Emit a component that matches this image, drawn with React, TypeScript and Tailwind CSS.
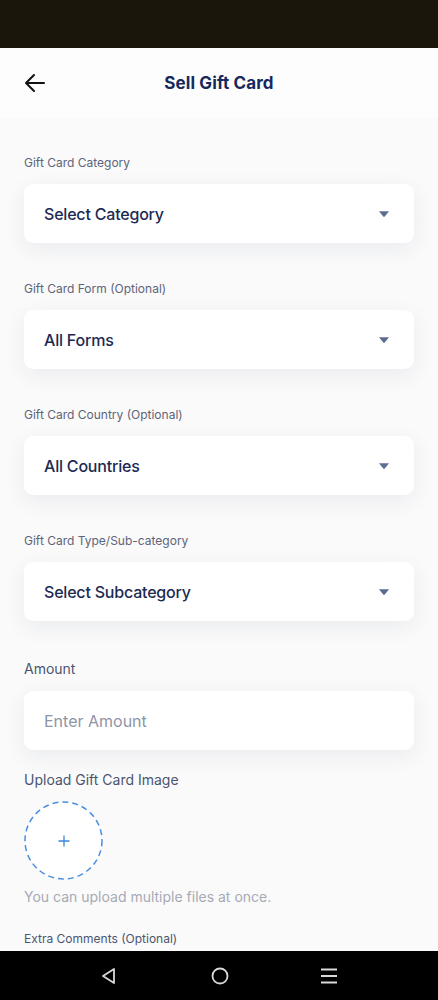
import React from "react";

function Caret() {
  return (
    <svg width="12" height="8" viewBox="0 0 12 8">
      <path d="M1 1.2 H11 L6.8 6.4 Q6 7.2 5.2 6.4 Z" fill="#5d6d92" />
    </svg>
  );
}

function SelectCard({ label, value }: { label: string; value: string }) {
  return (
    <div className="flex flex-col">
      <div className="text-[12px] leading-[16px] text-[#5d6479]">{label}</div>
      <div className="mt-[13px] h-[59px] rounded-[9px] bg-white shadow-[0_6px_22px_rgba(30,40,80,0.07)] flex items-center justify-between pl-[20px] pr-[24px]">
        <span className="text-[16px] font-medium tracking-[-0.2px] text-[#1c2a52]">{value}</span>
        <Caret />
      </div>
    </div>
  );
}

export default function App() {
  return (
    <div className="w-[438px] h-[1000px] flex flex-col bg-[#fafafa] overflow-hidden" style={{ fontFamily: "Inter, 'Noto Sans', sans-serif" }}>
      <div className="h-[48px] bg-[#1b160b] shrink-0" />
      <div className="h-[70px] relative flex items-start justify-center bg-[#fdfdfd] shrink-0">
        <svg className="absolute left-[24px] top-[25px]" width="21" height="20" viewBox="0 0 21 20">
          <path d="M20 10 H2 M10 2 L2 10 L10 18" fill="none" stroke="#111" strokeWidth="2" strokeLinecap="round" strokeLinejoin="round" />
        </svg>
        <div className="mt-[24px] text-[17px] leading-[22px] font-bold tracking-[0.1px] text-[#17295c]">Sell Gift Card</div>
      </div>
      <div className="flex-1 flex flex-col px-[24px] pt-[37px]">
        <div className="flex flex-col gap-[38px]">
          <SelectCard label="Gift Card Category" value="Select Category" />
          <SelectCard label="Gift Card Form (Optional)" value="All Forms" />
          <SelectCard label="Gift Card Country (Optional)" value="All Countries" />
          <SelectCard label="Gift Card Type/Sub-category" value="Select Subcategory" />
        </div>
        <div className="mt-[38px] text-[14px] leading-[20px] text-[#4b5570]">Amount</div>
        <div className="mt-[12px] h-[59px] rounded-[9px] bg-white shadow-[0_6px_22px_rgba(30,40,80,0.07)] flex items-center pl-[20px]">
          <span className="text-[16px] text-[#8f94a8]">Enter Amount</span>
        </div>
        <div className="mt-[20px] text-[14px] leading-[20px] text-[#4b5570]">Upload Gift Card Image</div>
        <div className="mt-[11px] w-[79px] h-[79px] relative flex items-center justify-center">
          <svg className="absolute inset-0" width="79" height="79" viewBox="0 0 79 79">
            <circle cx="39.5" cy="39.5" r="38.5" fill="#ffffff" stroke="#4a8ee0" strokeWidth="1.5" strokeDasharray="6 4" />
          </svg>
          <svg className="relative" width="12" height="12" viewBox="0 0 12 12">
            <path d="M6 0.5 V11.5 M0.5 6 H11.5" stroke="#3d85dc" strokeWidth="1.3" />
          </svg>
        </div>
        <div className="mt-[7px] text-[14px] leading-[20px] text-[#a6aab6]">You can upload multiple files at once.</div>
        <div className="mt-[24px] text-[12px] leading-[16px] text-[#4b5570]">Extra Comments (Optional)</div>
      </div>
      <div className="h-[49px] bg-black shrink-0 flex items-center justify-between pl-[99px] pr-[100px]">
        <svg width="20" height="20" viewBox="0 0 20 20">
          <path d="M15 3 V17 L4 10 Z" fill="none" stroke="#d8d8d8" strokeWidth="1.8" strokeLinejoin="round" />
        </svg>
        <svg width="20" height="20" viewBox="0 0 20 20">
          <circle cx="10" cy="10" r="7.5" fill="none" stroke="#d8d8d8" strokeWidth="1.8" />
        </svg>
        <svg width="18" height="20" viewBox="0 0 18 20">
          <path d="M1 3.5 H17 M1 10 H17 M1 16.5 H17" stroke="#d8d8d8" strokeWidth="1.8" />
        </svg>
      </div>
    </div>
  );
}
